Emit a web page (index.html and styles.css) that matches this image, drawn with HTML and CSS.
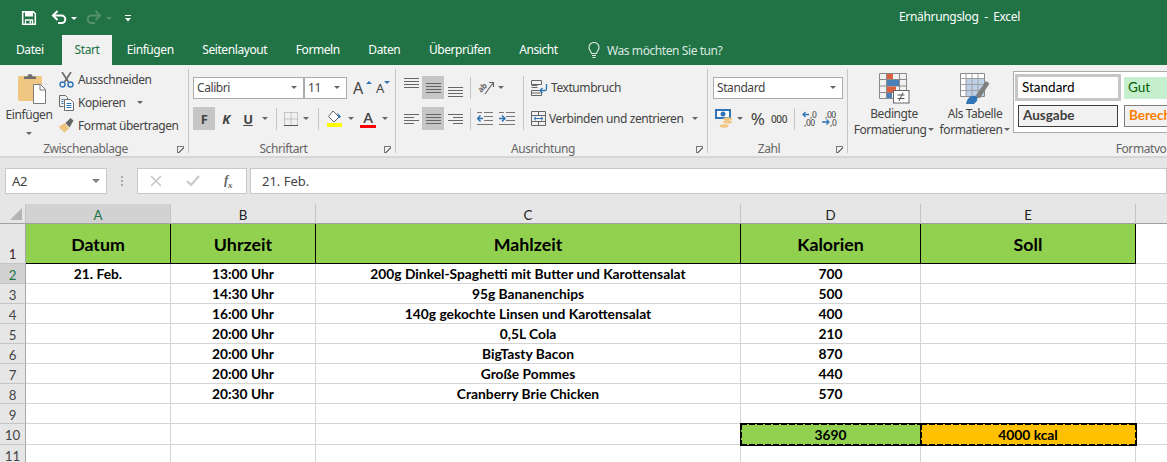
FILE: index.html
```html
<!DOCTYPE html>
<html lang="de">
<head>
    <meta charset="UTF-8">
    <title>Ernährungslog - Excel</title>
    <link rel="stylesheet" href="styles.css">
</head>
<body>
    <header class="titlebar">
        <div class="qat">
            <svg class="save" width="16" height="16" viewBox="0 0 16 16"><path d="M1.7 1.7h10.6l2 2v10.6H1.700z" fill="none" stroke="#fff" stroke-width="1.5"/><rect x="4" y="2" width="8" height="4.500" fill="#fff"/><path d="M4.500 14v-4h7v4" fill="none" stroke="#fff" stroke-width="1.300"/><rect x="8.500" y="11" width="1.500" height="2.500" fill="#fff"/></svg>
            <svg class="undo" width="16" height="15" viewBox="0 0 16 15"><path d="M2 5.500h8.500a3.800 3.800 0 0 1 0 7.600H7" fill="none" stroke="#fff" stroke-width="2"/><path d="M6.500 1L2 5.500 6.500 10" fill="none" stroke="#fff" stroke-width="2"/></svg>
            <span class="qat-caret"></span>
            <svg class="redo" width="16" height="15" viewBox="0 0 16 15"><path d="M14 5.500H5.500a3.800 3.800 0 0 0 0 7.600H9" fill="none" stroke="#54926f" stroke-width="2"/><path d="M9.500 1L14 5.500 9.500 10" fill="none" stroke="#54926f" stroke-width="2"/></svg>
            <span class="qat-caret dim"></span>
            <svg class="qat-custom" width="6" height="7" viewBox="0 0 6 7"><path d="M0 .5h6" stroke="#fff"/><path d="M0 3h6L3 6.500z" fill="#fff"/></svg>
            <span class="doc-title">Ernährungslog &nbsp;-&nbsp; Excel</span>
        </div>
        <nav class="tabs">
            <span class="tab file">Datei</span>
            <span class="tab active">Start</span>
            <span class="tab">Einfügen</span>
            <span class="tab">Seitenlayout</span>
            <span class="tab">Formeln</span>
            <span class="tab">Daten</span>
            <span class="tab">Überprüfen</span>
            <span class="tab">Ansicht</span>
            <span class="tell">
                <svg width="12" height="17" viewBox="0 0 12 17"><path d="M3.500 11.500C3.300 9.500 1 8.500 1 5.500a5 5 0 0 1 10 0c0 3-2.300 4-2.500 6z" fill="none" stroke="#e3eee8" stroke-width="1.100"/><path d="M4 13.500h4M4.500 15.500h3" stroke="#e3eee8" stroke-width="1.200"/></svg>
                Was möchten Sie tun?
            </span>
        </nav>
    </header>

    <section class="ribbon">
        <div class="group clipboard">
            <div class="group-body clip-body">
                <div class="paste">
                    <svg width="28" height="31" viewBox="0 0 28 31"><rect x="0" y="3" width="24" height="25" rx="1.500" fill="#efc682"/><path d="M6 6V3.500h3.500a2.500 2.500 0 0 1 5 0H18V6z" fill="#6e6e6e"/><path d="M15.500 11.500h7l5 5v14h-12z" fill="#fff" stroke="#7a7a7a"/><path d="M22 11.500v5.500h5.500" fill="none" stroke="#7a7a7a"/></svg>
                    <span class="paste-label">Einfügen</span>
                    <span class="caret"></span>
                </div>
                <div class="clip-actions">
                    <div class="clip-row">
                        <svg width="15" height="16" viewBox="0 0 15 16"><path d="M3 0l6.500 10M12 0L5.500 10" stroke="#6b6b6b" stroke-width="1.700"/><circle cx="3.500" cy="12.500" r="2.500" fill="none" stroke="#2f75b5" stroke-width="1.400"/><circle cx="11.500" cy="12.500" r="2.500" fill="none" stroke="#2f75b5" stroke-width="1.400"/></svg>
                        <span>Ausschneiden</span>
                    </div>
                    <div class="clip-row">
                        <svg width="15" height="16" viewBox="0 0 15 16"><path d="M.5.500h6l2 2v3M.5.500v11h4" fill="none" stroke="#6b6b6b"/><path d="M5.500 4.500h6l3 3v8h-9z" fill="#fff" stroke="#6b6b6b"/><path d="M7.500 8.500h5M7.500 10.500h5M7.500 12.500h5M2.500 4.500h2M2.500 6.500h2M2.500 8.500h2" stroke="#2f75b5"/></svg>
                        <span>Kopieren</span>
                        <span class="caret copy-caret"></span>
                    </div>
                    <div class="clip-row">
                        <svg width="15" height="15" viewBox="0 0 15 15"><path d="M0 8.500L6 5l4 5.500-4.500 4L3 12.500 4 10.500l-2 1.500z" fill="#eec27c"/><path d="M6.500 5l5-5 3 2.500-4 7z" fill="#666"/></svg>
                        <span>Format übertragen</span>
                    </div>
                </div>
            </div>
            <div class="group-label">Zwischenablage<i class="launcher"></i></div>
        </div>

        <div class="group font-group">
            <div class="group-body">
                <div class="font-row">
                    <div class="combo font-name"><span>Calibri</span><span class="caret"></span></div>
                    <div class="combo font-size"><span>11</span><span class="caret"></span></div>
                    <span class="grow">A<i class="up"></i></span>
                    <span class="shrink">A<i class="down"></i></span>
                </div>
                <div class="font-tools">
                    <span class="tool pressed bold">F</span>
                    <span class="tool italic">K</span>
                    <span class="tool under">U</span>
                    <span class="caret"></span>
                    <span class="vsep"></span>
                    <svg width="14" height="14" viewBox="0 0 14 14"><path d="M.5.500h13v13H.500zM7 .500v13M.5 7h13" fill="none" stroke="#999" stroke-width="1" stroke-dasharray="1 1"/><path d="M0 13.500h14" stroke="#555"/></svg>
                    <span class="caret"></span>
                    <span class="vsep"></span>
                    <svg width="17" height="17" viewBox="0 0 17 17"><path d="M7 1l6 6-5 5-5.500-5.500z" fill="#fff" stroke="#666"/><path d="M11 2.500l4 4-2 2z" fill="#2f75b5"/><rect x="1" y="13" width="15" height="4" fill="#ffff00"/></svg>
                    <span class="caret"></span>
                    <span class="color-a">A</span>
                    <span class="caret"></span>
                </div>
            </div>
            <div class="group-label">Schriftart<i class="launcher"></i></div>
        </div>

        <div class="group align-group">
            <div class="group-body align-body">
                <div class="align-grid">
                    <span class="tool"><i class="lines top"></i></span>
                    <span class="tool pressed"><i class="lines"></i></span>
                    <span class="tool"><i class="lines bottom"></i></span>
                    <span class="vsep"></span>
                    <span class="orient">
                        <svg width="19" height="18" viewBox="0 0 19 18"><text x="2" y="11" transform="rotate(-45 7 9)" class="orient-text">ab</text><path d="M9 15L17 4M13 3.500h4.500V8" fill="none" stroke="#666" stroke-width="1.200"/></svg>
                        <span class="caret"></span>
                    </span>
                    <span class="tool"><i class="lines left"></i></span>
                    <span class="tool pressed"><i class="lines"></i></span>
                    <span class="tool"><i class="lines right"></i></span>
                    <span class="vsep"></span>
                    <svg width="16" height="13" viewBox="0 0 16 13"><path d="M7 .500h9M7 4.500h9M7 8.500h9M0 12.500h16M0 .500h5" stroke="#777"/><path d="M6 6.500H1M3.500 3.500l-3 3 3 3" fill="none" stroke="#2f75b5" stroke-width="1.500"/></svg>
                    <svg width="16" height="13" viewBox="0 0 16 13"><path d="M7 .500h9M7 4.500h9M7 8.500h9M0 12.500h16M0 .500h5" stroke="#777"/><path d="M0 6.500h5M3 3.500l3 3-3 3" fill="none" stroke="#2f75b5" stroke-width="1.500"/></svg>
                </div>
                <div class="vsep tall"></div>
                <div class="merge">
                    <div class="merge-row">
                        <svg width="17" height="16" viewBox="0 0 17 16"><path d="M.5.500h10v4H.5zM.5 10.500h10v5H.5zM.5 5.500h6" fill="none" stroke="#666"/><path d="M.5 13h9M.5 7.500h6" stroke="#666"/><path d="M15.500 4v5a1.500 1.500 0 0 1-1.500 1.500H9M11.500 8l-2.500 2.500 2.500 2.500" fill="none" stroke="#2f75b5" stroke-width="1.300"/></svg>
                        <span>Textumbruch</span>
                    </div>
                    <div class="merge-row">
                        <svg width="15" height="15" viewBox="0 0 15 15"><path d="M.5.500h14v14H.5zM.5 4.500h14M.5 10.500h14M7.500.500v4M7.500 10.500v4" fill="none" stroke="#666"/><path d="M3 7.500h9M5 5.700L3 7.500l2 1.800M10 5.700l2 1.800-2 1.800" fill="none" stroke="#2f75b5"/></svg>
                        <span>Verbinden und zentrieren</span>
                        <span class="caret merge-caret"></span>
                    </div>
                </div>
            </div>
            <div class="group-label">Ausrichtung<i class="launcher"></i></div>
        </div>

        <div class="group number-group">
            <div class="group-body">
                <div class="combo number-format"><span>Standard</span><span class="caret"></span></div>
                <div class="number-tools">
                    <svg width="18" height="19" viewBox="0 0 18 19"><rect x="0" y="0" width="16" height="10" fill="#2f75b5"/><rect x="2" y="2" width="12" height="6" fill="#fff"/><circle cx="8" cy="5" r="2.500" fill="#2f75b5"/><ellipse cx="12.500" cy="10" rx="4.500" ry="1.700" fill="#efc682"/><ellipse cx="12.500" cy="13" rx="4.500" ry="1.700" fill="#efc682"/><ellipse cx="9" cy="17" rx="4.500" ry="1.700" fill="#efc682"/></svg>
                    <span class="caret"></span>
                    <span class="percent">%</span>
                    <span class="thousand">000</span>
                    <span class="vsep"></span>
                    <svg class="dec-icon" width="18" height="18" viewBox="0 0 18 18"><text x="9" y="8" class="dec-text">,0</text><text x="3" y="16" class="dec-text">,00</text><path d="M8 4.500H2M4.500 2L2 4.500 4.500 7" fill="none" stroke="#2f75b5" stroke-width="1.300"/></svg>
                    <svg class="dec-icon" width="18" height="18" viewBox="0 0 18 18"><text x="4" y="8" class="dec-text">,00</text><text x="9" y="16" class="dec-text">,0</text><path d="M1 12h7M5.500 9.500L8 12l-2.500 2.500" fill="none" stroke="#2f75b5" stroke-width="1.300"/></svg>
                </div>
            </div>
            <div class="group-label">Zahl<i class="launcher"></i></div>
        </div>

        <div class="group styles-group">
            <div class="group-body styles-body">
                <div class="big-btn cond">
                    <svg width="31" height="31" viewBox="0 0 31 31"><path d="M.5.500h27v25H.5zM7.500.500v25M20.500.500v25M.5 6.500h27M.5 13h27M.5 19.500h27" fill="none" stroke="#8a8a8a"/><rect x="8" y="1" width="6" height="5" fill="#dc6141"/><rect x="8" y="7" width="12" height="6" fill="#4a80b8"/><rect x="8" y="13.500" width="9" height="6" fill="#dc6141"/><rect x="8" y="20" width="5" height="5" fill="#4a80b8"/><rect x="14.500" y="17.500" width="15.500" height="12.500" fill="#fff" stroke="#666"/><path d="M18.500 22h7M18.500 25.500h7M24 19.500l-4 8.500" stroke="#555"/></svg>
                    <span>Bedingte</span>
                    <span>Formatierung<i class="caret"></i></span>
                </div>
                <div class="big-btn table-btn">
                    <svg width="30" height="31" viewBox="0 0 30 31"><path d="M.5.500h24v23H.5z" fill="#fff" stroke="#8a8a8a"/><rect x="6" y="6" width="18" height="17" fill="#bdd0e9"/><path d="M.5 5.500h24M.5 11.500h24M.5 17.500h24M6 .500v23M12 .500v23M18 .500v23" stroke="#a0a0a0"/><path d="M14 25l12-17 3.500 2.500L20 25z" fill="#7f7f7f"/><path d="M6 31c1-5 4-9 9-8 3 1 3 4 1 6l-2 2z" fill="#2f75b5"/></svg>
                    <span>Als Tabelle</span>
                    <span>formatieren<i class="caret"></i></span>
                </div>
                <div class="gallery">
                    <span class="style-cell st-standard">Standard</span>
                    <span class="style-cell st-gut">Gut</span>
                    <span class="style-cell st-ausgabe">Ausgabe</span>
                    <span class="style-cell st-berech">Berechnung</span>
                </div>
            </div>
            <div class="group-label">Formatvorlagen</div>
        </div>
    </section>

    <section class="formula-bar">
        <div class="name-box"><span>A2</span><span class="caret"></span></div>
        <span class="grip"></span>
        <div class="fx-buttons">
            <svg width="12" height="12" viewBox="0 0 12 12"><path d="M1 1l10 10M11 1L1 11" stroke="#c8c8c8" stroke-width="1.600"/></svg>
            <svg width="14" height="12" viewBox="0 0 14 12"><path d="M1 6l4 4 8-9" fill="none" stroke="#c8c8c8" stroke-width="2"/></svg>
            <span class="fx">f<sub>x</sub></span>
        </div>
        <div class="formula-input">21. Feb.</div>
    </section>

    <main class="sheet">
        <table>
            <colgroup>
                <col class="c-head"><col class="c-a"><col class="c-b"><col class="c-c"><col class="c-d"><col class="c-e"><col>
            </colgroup>
            <tr class="col-heads">
                <th class="corner"><svg width="12" height="12" viewBox="0 0 12 12"><path d="M12 0v12H0z" fill="#b4b4b4"/></svg></th>
                <th class="selected">A</th><th>B</th><th>C</th><th>D</th><th>E</th><th></th>
            </tr>
            <tr class="title-row">
                <th>1</th><td>Datum</td><td>Uhrzeit</td><td>Mahlzeit</td><td>Kalorien</td><td>Soll</td><td class="blank"></td>
            </tr>
            <tr>
                <th class="selected">2</th><td>21. Feb.</td><td>13:00 Uhr</td><td>200g Dinkel-Spaghetti mit Butter und Karottensalat</td><td>700</td><td></td><td></td>
            </tr>
            <tr>
                <th>3</th><td></td><td>14:30 Uhr</td><td>95g Bananenchips</td><td>500</td><td></td><td></td>
            </tr>
            <tr>
                <th>4</th><td></td><td>16:00 Uhr</td><td>140g gekochte Linsen und Karottensalat</td><td>400</td><td></td><td></td>
            </tr>
            <tr>
                <th>5</th><td></td><td>20:00 Uhr</td><td>0,5L Cola</td><td>210</td><td></td><td></td>
            </tr>
            <tr>
                <th>6</th><td></td><td>20:00 Uhr</td><td>BigTasty Bacon</td><td>870</td><td></td><td></td>
            </tr>
            <tr>
                <th>7</th><td></td><td>20:00 Uhr</td><td>Große Pommes</td><td>440</td><td></td><td></td>
            </tr>
            <tr>
                <th>8</th><td></td><td>20:30 Uhr</td><td>Cranberry Brie Chicken</td><td>570</td><td></td><td></td>
            </tr>
            <tr>
                <th>9</th><td></td><td></td><td></td><td></td><td></td><td></td>
            </tr>
            <tr class="sum-row">
                <th>10</th><td></td><td></td><td></td><td class="marquee sum-green">3690</td><td class="marquee sum-orange">4000 kcal</td><td></td>
            </tr>
            <tr>
                <th>11</th><td></td><td></td><td></td><td></td><td></td><td></td>
            </tr>
        </table>
    </main>
</body>
</html>
```

FILE: styles.css
```css
* {
    margin: 0;
    padding: 0;
    box-sizing: border-box;
}
body {
    width: 1167px;
    height: 462px;
    overflow: hidden;
    background: #e6e6e6;
    font-family: "Noto Sans", sans-serif;
    font-size: 12px;
    letter-spacing: -0.42px;
    color: #444;
}
svg {
    display: block;
    flex: none;
}
.caret {
    display: inline-block;
    width: 0;
    height: 0;
    border: 3px solid transparent;
    border-top-color: #666;
    border-bottom: 0;
    justify-self: center;
}

/* title bar */
.titlebar {
    height: 65px;
    background: #217346;
    color: #fff;
}
.qat {
    display: flex;
    align-items: center;
    height: 35px;
    padding-left: 21px;
}
.undo {
    margin-left: 14px;
}
.redo {
    margin-left: 9px;
}
.qat-caret {
    width: 0;
    height: 0;
    margin: 1px 0 0 4px;
    border: 3px solid transparent;
    border-top-color: #fff;
    border-bottom: 0;
}
.qat-caret.dim {
    border-top-color: #54926f;
}
.qat-custom {
    margin: 1px 0 0 13px;
}
.doc-title {
    margin-left: 768px;
    margin-top: -3px;
    letter-spacing: -0.33px;
}
.tabs {
    display: flex;
    align-items: stretch;
    height: 30px;
    padding-left: 2px;
}
.tab {
    padding: 2px 14.3px 0;
    line-height: 26px;
}
.tab.file {
    padding: 2px 18px 0 14px;
}
.tab.active {
    padding: 2px 13px 0;
    background: #f1f1f1;
    color: #217346;
}
.tell {
    display: flex;
    align-items: center;
    gap: 7px;
    margin-left: 16px;
    color: #dbe8e1;
}

/* ribbon */
.ribbon {
    display: flex;
    height: 93px;
    padding-top: 4px;
    overflow: hidden;
    background: #f1f1f1;
    border-bottom: 2px solid #d6d6d6;
}
.group {
    flex: none;
    height: 84px;
    border-right: 1px solid #c6c6c6;
}
.group-body {
    height: 72px;
}
.group-label {
    position: relative;
    padding: 1px 17px 0 0;
    line-height: 14px;
    text-align: center;
    color: #666;
}
.styles-group .group-label {
    padding-right: 0;
}
.launcher {
    position: absolute;
    right: 4px;
    top: 5px;
    width: 7px;
    height: 7px;
    border: solid #777;
    border-width: 1px 0 0 1px;
    background: linear-gradient(135deg, transparent 45%, #777 45% 60%, transparent 60%);
}
.clipboard {
    width: 189px;
}
.clip-body {
    display: flex;
}
.paste {
    display: flex;
    flex-direction: column;
    align-items: center;
    width: 50px;
    margin-left: 4px;
    padding-top: 4px;
}
.paste svg {
    margin-left: 5px;
}
.paste-label {
    margin-top: 1px;
    line-height: 20px;
}
.paste .caret {
    margin-top: 7px;
}
.clip-actions {
    margin-left: 5px;
}
.clip-row {
    display: flex;
    align-items: center;
    gap: 4px;
    height: 23px;
    white-space: nowrap;
}
.clip-row:first-child {
    height: 21px;
    margin-bottom: 1px;
}
.copy-caret {
    margin-left: 8px;
}

.font-group {
    width: 207px;
}
.font-group .group-body {
    padding: 8px 0 0 4px;
}
.font-row {
    display: flex;
    align-items: center;
    height: 22px;
}
.combo {
    display: flex;
    align-items: center;
    justify-content: space-between;
    height: 22px;
    padding: 0 6px 1px 3px;
    background: #fff;
    border: 1px solid #ababab;
}
.font-name {
    width: 111px;
}
.font-size {
    width: 43px;
}
.grow, .shrink {
    position: relative;
    display: block;
    line-height: 22px;
}
.grow {
    margin-left: 6px;
    width: 21px;
    font-size: 16px;
}
.shrink {
    margin-left: 2px;
    font-size: 13px;
}
.up, .down {
    position: absolute;
    top: 4px;
    right: 2px;
    border: 3px solid transparent;
}
.up {
    border-bottom-color: #2f75b5;
    border-top: 0;
}
.down {
    right: -6px;
    border-top-color: #2f75b5;
    border-bottom: 0;
}
.font-tools {
    display: grid;
    grid-template-columns: 22px 22px 22px 11px 12px 17px 14px 10px 22px 11px 24px 9px;
    align-items: center;
    justify-items: center;
    height: 23px;
    margin-top: 8px;
}
.tool {
    display: flex;
    align-items: center;
    justify-content: center;
    width: 22px;
    height: 23px;
}
.pressed {
    background: #c6c6c6;
}
.bold {
    font-weight: 700;
    font-size: 13px;
}
.italic {
    font-weight: 700;
    font-style: italic;
    font-size: 13px;
}
.under {
    font-weight: 700;
    font-size: 13px;
    text-decoration: underline;
}
.vsep {
    display: block;
    width: 1px;
    height: 22px;
    background: #c6c6c6;
    justify-self: center;
}
.color-a {
    font-size: 15px;
    line-height: 15px;
    width: 16px;
    text-align: center;
    font-weight: 500;
    border-bottom: 3px solid #ff0000;
}

.align-group {
    width: 312px;
}
.align-body {
    display: flex;
    padding: 7px 0 0 4px;
}
.align-grid {
    display: grid;
    grid-template-columns: 22px 22px 22px 8px 22px 22px;
    grid-template-rows: 23px 23px;
    row-gap: 8px;
    align-items: center;
    justify-items: center;
    width: 118px;
}
.lines {
    display: block;
    width: 15px;
    height: 10px;
    background: linear-gradient(#666 1px, transparent 1px) 0 0 / 15px 3px;
}
.lines.top {
    margin-bottom: 9px;
}
.lines.bottom {
    margin-top: 9px;
}
.lines.left {
    background:
        linear-gradient(#666 1px, transparent 1px) 0 0 / 15px 6px,
        linear-gradient(#666 1px, transparent 1px) 0 3px / 10px 6px;
    background-repeat: repeat-y;
}
.lines.right {
    background:
        linear-gradient(#666 1px, transparent 1px) 0 0 / 15px 6px,
        linear-gradient(#666 1px, transparent 1px) 5px 3px / 10px 6px;
    background-repeat: repeat-y;
}
.orient {
    display: flex;
    align-items: center;
    gap: 3px;
    grid-column: span 2;
    margin-left: -13px;
}
.orient-text {
    font: 700 8px "Noto Sans", sans-serif;
    fill: #666;
}
.vsep.tall {
    height: 54px;
    margin-left: 5px;
    margin-right: 7px;
}
.merge-row {
    display: flex;
    align-items: center;
    gap: 3px;
    height: 23px;
    white-space: nowrap;
}
.merge-row + .merge-row {
    margin-top: 8px;
}
.merge-caret {
    margin-left: 6px;
}

.number-group {
    width: 140px;
}
.number-group .group-body {
    padding: 8px 0 0 5px;
}
.number-format {
    width: 130px;
}
.number-tools {
    display: grid;
    grid-template-columns: 22px 9px 27px 16px 14px 18px 22px;
    align-items: center;
    justify-items: center;
    height: 23px;
    margin-top: 8px;
}
.percent {
    font-size: 17px;
}
.thousand {
    font-size: 10px;
    font-weight: 500;
}
.dec-icon {
    overflow: visible;
}
.dec-text {
    font: 500 8.5px "Noto Sans", sans-serif;
    fill: #555;
}

.styles-group {
    width: 620px;
    border-right: 0;
}
.styles-body {
    display: flex;
}
.big-btn {
    display: flex;
    flex-direction: column;
    align-items: center;
    flex: none;
    padding-top: 4px;
    line-height: 16px;
    white-space: nowrap;
}
.big-btn svg {
    margin-bottom: 2px;
}
.big-btn .caret {
    margin: 0 0 2px 2px;
    vertical-align: middle;
}
.cond {
    width: 92px;
}
.table-btn {
    width: 70px;
    margin-right: 3px;
}
.gallery {
    display: grid;
    grid-template-columns: 106px 100px;
    grid-template-rows: 27px 22px;
    column-gap: 3px;
    row-gap: 4px;
    width: 300px;
    height: 62px;
    margin-top: 2px;
    padding: 2px 0 0 1px;
    background: #fff;
    border: 1px solid #ababab;
    font-family: Lato, sans-serif;
    font-size: 13.5px;
    letter-spacing: 0;
}
.style-cell {
    display: flex;
    align-items: center;
    padding: 0 0 2px 4px;
}
.st-standard {
    border: 3px solid #c6c6c6;
    color: #000;
}
.st-gut {
    height: 22px;
    margin-top: 3px;
    background: #c6efce;
    color: #006100;
}
.st-ausgabe {
    margin: 0 3px;
    background: #f2f2f2;
    border: 1px solid #3f3f3f;
    color: #3f3f3f;
    font-weight: 700;
}
.st-berech {
    background: #f2f2f2;
    border: 1px solid #7f7f7f;
    color: #fa7d00;
    font-weight: 700;
}

/* formula bar */
.formula-bar {
    display: flex;
    align-items: flex-start;
    height: 46px;
    padding: 10px 0 0 5px;
    background: #e6e6e6;
}
.name-box {
    display: flex;
    align-items: center;
    justify-content: space-between;
    width: 102px;
    height: 26px;
    padding: 0 6px;
    background: #fff;
    border: 1px solid #c8c8c8;
    font-size: 13px;
}
.name-box .caret {
    border-width: 4px;
    border-bottom: 0;
    border-top-color: #808080;
}
.grip {
    width: 2px;
    height: 10px;
    margin: 8px 14px 0 14px;
    background: repeating-linear-gradient(#aaa 0 2px, transparent 2px 4px);
}
.fx-buttons {
    display: flex;
    align-items: center;
    width: 110px;
    height: 26px;
    padding-left: 12px;
    background: #fff;
    border: 1px solid #c8c8c8;
}
.fx-buttons svg + svg {
    margin-left: 24px;
}
.fx {
    margin-left: 24px;
    font: italic 700 13px "Liberation Serif", serif;
    color: #666;
}
.fx sub {
    font-size: 9px;
}
.formula-input {
    flex: 1;
    height: 26px;
    margin-left: 3px;
    padding-left: 11px;
    line-height: 24px;
    background: #fff;
    border: 1px solid #c8c8c8;
    font-size: 13px;
    letter-spacing: 0;
}

/* sheet */
.sheet {
    height: 258px;
    overflow: hidden;
    background: #fff;
}
table {
    width: 1280px;
    border-collapse: separate;
    border-spacing: 0;
    table-layout: fixed;
    font-family: Lato, sans-serif;
    font-size: 13.8px;
    letter-spacing: 0;
    color: #000;
}
.c-head { width: 26px; }
.c-a { width: 145px; }
.c-b { width: 145px; }
.c-c { width: 425px; }
.c-d { width: 180px; }
.c-e { width: 215px; }
th, td {
    height: 20px;
    text-align: center;
    font-weight: 700;
    white-space: nowrap;
    border-right: 1px solid #d4d4d4;
    border-bottom: 1px solid #d4d4d4;
}
th {
    padding-top: 2px;
    background: #e6e6e6;
    border-right-color: #a6a6a6;
    border-bottom-color: #c4c4c4;
    font-size: 13.3px;
    font-weight: 400;
    color: #444;
}
.col-heads th {
    height: 20px;
    border-right-color: #c4c4c4;
    border-bottom-color: #a0a0a0;
    color: #222;
}
.corner svg {
    margin: -2px 0 0 10px;
}
th.selected {
    background: #d2d2d2;
    color: #217346;
}
.title-row th {
    height: 40px;
    vertical-align: bottom;
    padding-bottom: 1px;
    color: #4a2530;
}
.title-row td {
    height: 40px;
    background: #92d050;
    border-right-color: #000;
    border-bottom-color: #000;
    font-size: 17.8px;
}
.title-row td.blank {
    background: #fff;
    border-right-color: #d4d4d4;
    border-bottom-color: #d4d4d4;
}
.sum-row th, .sum-row td {
    height: 21px;
}
.sum-green {
    --fill: #92d050;
}
.sum-orange {
    --fill: #ffc000;
}
.marquee {
    position: relative;
    background-color: var(--fill);
    background-image:
        repeating-linear-gradient(90deg, #000 0 6px, transparent 6px 8px),
        repeating-linear-gradient(90deg, #000 0 6px, transparent 6px 8px),
        repeating-linear-gradient(#000 0 6px, transparent 6px 8px),
        repeating-linear-gradient(#000 0 6px, transparent 6px 8px);
    background-size: 100% 1px, 100% 1px, 1px 100%, 1px 100%;
    background-position: top, bottom, left, right;
    background-repeat: no-repeat;
    background-origin: border-box;
    border-color: transparent;
    box-shadow: 0 0 0 1px #000;
}
```
